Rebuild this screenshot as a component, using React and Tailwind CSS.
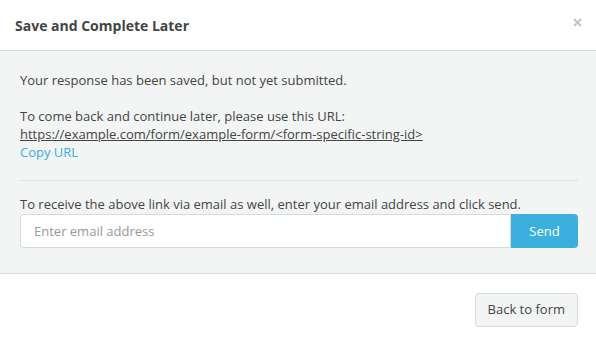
export default function App() {
  return (
    <div className="w-[596px] h-[346px] bg-white text-[13px] text-[#444] font-['Open_Sans',sans-serif] flex flex-col">
      <div className="h-[51px] shrink-0 flex items-center justify-between pl-[15px] pr-[14px] border-b border-[#d5dcdf]">
        <h4 className="text-[14px] font-bold text-[#444]">Save and Complete Later</h4>
        <button className="text-[#c2c2c2] -mt-[5px]">
          <svg width="9" height="9" viewBox="0 0 9 9" stroke="currentColor" strokeWidth="2">
            <path d="M1 1L8 8M8 1L1 8" />
          </svg>
        </button>
      </div>
      <div className="bg-[#f3f5f5] h-[223px] shrink-0 border-b border-[#d5dcdc] pl-[20px] pr-[18px] pt-[20px] leading-[18px]">
        <p>Your response has been saved, but not yet submitted.</p>
        <p className="mt-[18px]">To come back and continue later, please use this URL:</p>
        <a className="underline text-[#444] block">https://example.com/form/example-form/&lt;form-specific-string-id&gt;</a>
        <a className="text-[#3aade0] block">Copy URL</a>
        <hr className="border-t border-[#dfe3e3] mt-[19px] mb-[14px]" />
        <p>To receive the above link via email as well, enter your email address and click send.</p>
        <div className="flex h-[34px] mt-[1px]">
          <input
            className="flex-1 bg-white border border-[#d5dcdc] rounded-l-[4px] px-[13px] outline-none placeholder:text-[#999] text-[13px]"
            placeholder="Enter email address"
          />
          <button className="w-[67px] bg-[#3bb0de] text-white rounded-r-[4px]">Send</button>
        </div>
      </div>
      <div className="flex justify-end px-[18px] pt-[19px]">
        <button className="h-[34px] px-[12px] bg-[#f3f4f4] border border-[#d5dcdc] rounded-[4px] text-[#444]">Back to form</button>
      </div>
    </div>
  );
}
